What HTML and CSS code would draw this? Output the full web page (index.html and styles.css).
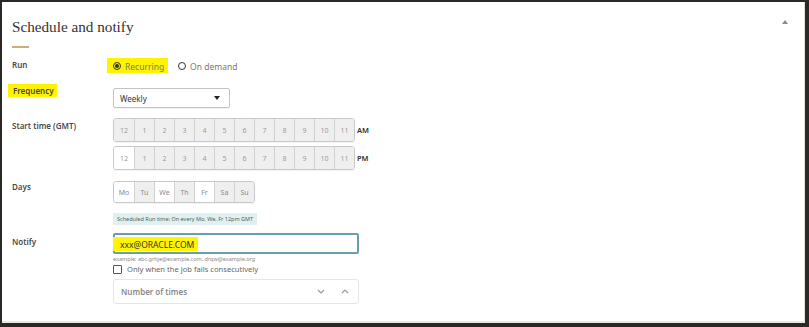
FILE: index.html
```html
<!DOCTYPE html>
<html lang="en">
<head>
    <meta charset="UTF-8">
    <meta name="viewport" content="width=device-width, initial-scale=1.0">
    <title>Schedule and notify</title>
    <link rel="stylesheet" href="styles.css">
</head>
<body>
    <div class="panel">
        <div class="panel-header">
            <h2 class="title">Schedule and notify</h2>
            <svg class="collapse" width="6" height="4" viewBox="0 0 6 4"><polygon points="0,4 3,0 6,4" fill="#8a8a8a"/></svg>
        </div>
        <div class="accent"></div>

        <div class="row row-run">
            <div class="label">Run</div>
            <div class="field radios">
                <div class="radio marked"><span class="dot checked"></span>Recurring</div>
                <div class="radio"><span class="dot"></span>On demand</div>
            </div>
        </div>

        <div class="row row-freq">
            <div class="label"><span class="marked label-mark">Frequency</span></div>
            <div class="field">
                <div class="select">
                    <span>Weekly</span>
                    <svg width="6" height="4" viewBox="0 0 6 4"><polygon points="0,0 6,0 3,4" fill="#222"/></svg>
                </div>
            </div>
        </div>

        <div class="row row-start">
            <div class="label">Start time (GMT)</div>
            <div class="field hours">
                <div class="hour-line">
                    <div class="cells">
                        <div class="cell">12</div><div class="cell">1</div><div class="cell">2</div><div class="cell">3</div>
                        <div class="cell">4</div><div class="cell">5</div><div class="cell">6</div><div class="cell">7</div>
                        <div class="cell">8</div><div class="cell">9</div><div class="cell">10</div><div class="cell">11</div>
                    </div>
                    <span class="ampm">AM</span>
                </div>
                <div class="hour-line">
                    <div class="cells">
                        <div class="cell on">12</div><div class="cell">1</div><div class="cell">2</div><div class="cell">3</div>
                        <div class="cell">4</div><div class="cell">5</div><div class="cell">6</div><div class="cell">7</div>
                        <div class="cell">8</div><div class="cell">9</div><div class="cell">10</div><div class="cell">11</div>
                    </div>
                    <span class="ampm">PM</span>
                </div>
            </div>
        </div>

        <div class="row row-days">
            <div class="label">Days</div>
            <div class="field">
                <div class="cells days">
                    <div class="cell on">Mo</div><div class="cell">Tu</div><div class="cell on">We</div><div class="cell">Th</div>
                    <div class="cell on">Fr</div><div class="cell">Sa</div><div class="cell">Su</div>
                </div>
            </div>
        </div>

        <div class="row row-info">
            <div class="label"></div>
            <div class="field">
                <div class="info">Scheduled Run time: On every Mo, We, Fr 12pm GMT</div>
            </div>
        </div>

        <div class="row row-notify">
            <div class="label">Notify</div>
            <div class="field">
                <div class="text-input"><span class="marked email">xxx@ORACLE.COM</span></div>
                <div class="hint">example: abc.grhje@example.com, drqw@example.org</div>
                <div class="check-line"><span class="box"></span>Only when the job fails consecutively</div>
                <div class="spinner">
                    <span>Number of times</span>
                    <div class="arrows">
                        <svg width="8" height="5" viewBox="0 0 8 5"><polyline points="1,1 4,4 7,1" fill="none" stroke="#9a9a9a" stroke-width="1.2"/></svg>
                        <svg width="8" height="5" viewBox="0 0 8 5"><polyline points="1,4 4,1 7,4" fill="none" stroke="#9a9a9a" stroke-width="1.2"/></svg>
                    </div>
                </div>
            </div>
        </div>
    </div>
</body>
</html>
```

FILE: styles.css
```css
* {
    margin: 0;
    padding: 0;
    box-sizing: border-box;
}

body {
    background: #2b2926;
    font-family: "Noto Sans", Arial, sans-serif;
    color: #4a4a4a;
    overflow: hidden;
}

.panel {
    background: white;
    margin: 2px 4px 4px 2px;
    height: 321px;
    border-right: 1px solid #e2ded8;
    border-bottom: 2px solid #ebe7e1;
    padding: 15px 0 0 10px;
}

.panel-header {
    display: flex;
    justify-content: space-between;
    align-items: flex-start;
    padding-right: 16px;
}

.title {
    font-family: "Liberation Serif", Georgia, serif;
    font-weight: normal;
    font-size: 15.2px;
    line-height: 20px;
    color: #333;
}

.collapse {
    margin-top: 3px;
}

.accent {
    width: 17px;
    height: 2px;
    background: #cfab80;
    margin-top: 9px;
}

.row {
    display: flex;
    align-items: flex-start;
}

.label {
    flex: 0 0 101px;
    font-size: 8px;
    font-weight: 600;
    line-height: 12px;
    color: #4a4a4a;
}

.field {
    flex: 1;
}

.marked {
    background: #fff300;
}

/* run */
.row-run {
    margin-top: 10px;
    height: 15px;
}

.row-run .label {
    padding-top: 1px;
}

.radios {
    display: flex;
    align-items: center;
    margin-left: -6px;
    gap: 4px;
}

.radio {
    display: flex;
    align-items: center;
    gap: 4px;
    height: 15px;
    padding: 1px 4px 0 6px;
    font-size: 8.5px;
    color: #7a7a6a;
}

.dot {
    width: 8px;
    height: 8px;
    border: 1px solid #333;
    border-radius: 50%;
    display: flex;
    align-items: center;
    justify-content: center;
}

.dot.checked::after {
    content: "";
    width: 4px;
    height: 4px;
    border-radius: 50%;
    background: #333;
}

/* frequency */
.row-freq {
    margin-top: 15px;
}

.label-mark {
    display: block;
    width: fit-content;
    margin: -4px 0 0 -4px;
    padding: 1px 3px 1px 5px;
    line-height: 11px;
    color: #4a4a30;
}

.select {
    width: 117px;
    height: 20px;
    border: 1px solid #c4c4c4;
    border-radius: 2px;
    box-shadow: 0 1px 1px rgba(0, 0, 0, 0.06);
    display: flex;
    align-items: center;
    justify-content: space-between;
    padding: 0 9px 0 6px;
    font-size: 8px;
    color: #333;
}

/* start time */
.row-start {
    margin-top: 10px;
}

.row-start .label {
    padding-top: 2px;
}

.hours {
    display: flex;
    flex-direction: column;
    gap: 4px;
}

.hour-line {
    display: flex;
    align-items: center;
    gap: 2px;
}

.cells {
    display: flex;
    width: fit-content;
    border: 1px solid #c9c9c9;
    border-radius: 3px;
    overflow: hidden;
    box-shadow: 0 1px 1px rgba(0, 0, 0, 0.05);
}

.cell {
    width: 20px;
    height: 22px;
    background: #efefef;
    border-left: 1px solid #d2d2d2;
    display: flex;
    align-items: center;
    justify-content: center;
    font-size: 7px;
    color: #9c9c9c;
}

.cell:first-child {
    border-left: none;
}

.cell.on {
    background: white;
}

.ampm {
    font-size: 7.5px;
    font-weight: 600;
    color: #333;
}

/* days */
.row-days {
    margin-top: 11px;
}

.days .cell {
    height: 20px;
    color: #8a8a8a;
}

/* info */
.row-info {
    margin-top: 10px;
}

.info {
    width: fit-content;
    background: #e1f0ef;
    font-size: 5.5px;
    line-height: 12px;
    padding: 0 4px;
    color: #4f5f66;
}

/* notify */
.row-notify {
    margin-top: 8px;
}

.row-notify .label {
    padding-top: 3px;
}

.text-input {
    width: 246px;
    height: 21px;
    border: 2px solid #6a9db0;
    border-radius: 2px;
    display: flex;
    align-items: center;
}

.email {
    margin-left: -2px;
    padding: 2px 4px 1px 7px;
    font-size: 8.5px;
    line-height: 11px;
    color: #333;
}

.hint {
    font-size: 5.5px;
    line-height: 8px;
    margin-top: 1px;
    color: #888;
}

.check-line {
    display: flex;
    align-items: center;
    gap: 5px;
    height: 10px;
    margin-top: 1px;
    font-size: 7.6px;
    color: #666;
}

.box {
    width: 9px;
    height: 9px;
    border: 1.5px solid #555;
    border-radius: 1px;
}

.spinner {
    width: 246px;
    height: 25px;
    margin-top: 5px;
    border: 1px solid #e6e6e6;
    border-radius: 3px;
    display: flex;
    align-items: center;
    justify-content: space-between;
    padding: 0 9px 0 7px;
    font-size: 8px;
    font-weight: 600;
    color: #8a8a8a;
}

.arrows {
    display: flex;
    gap: 16px;
}
```
